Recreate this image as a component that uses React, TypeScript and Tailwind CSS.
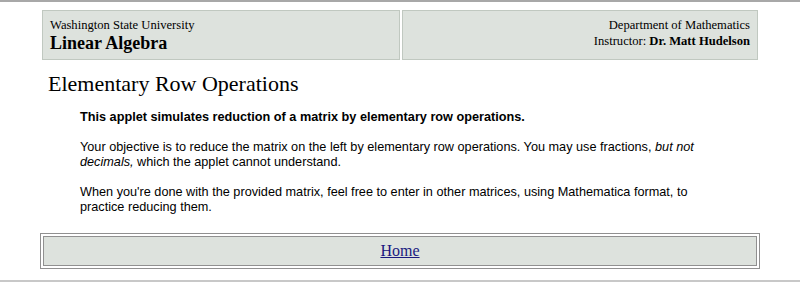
export default function App() {
  return (
    <div className="w-[800px] h-[286px] bg-white overflow-hidden font-['Liberation_Serif',serif] text-black">
      <div className="border-t-2 border-[#a8a8a8]" />

      <div className="mx-auto mt-[6px] flex w-[720px] gap-[2px] p-[2px]">
        <div className="h-[50px] w-[358px] border border-[#c0c8c0] bg-[#dde2dd] pl-[7px] pt-[6px]">
          <div className="text-[12.6px] leading-[16px]">Washington State University</div>
          <div className="text-[18px] font-bold leading-[21px]">Linear Algebra</div>
        </div>
        <div className="h-[50px] flex-1 border border-[#c0c8c0] bg-[#dde2dd] pr-[7px] pt-[6px] text-right text-[12.6px] leading-[16px]">
          <div>Department of Mathematics</div>
          <div>
            Instructor: <b>Dr. Matt Hudelson</b>
          </div>
        </div>
      </div>

      <h1 className="ml-[48px] mt-[9px] text-[22px] leading-[26px]">Elementary Row Operations</h1>

      <div className="ml-[80px] mt-[13px] w-[640px] font-['Liberation_Sans',Arial,sans-serif] text-[12.7px] leading-[15px]">
        <p className="font-bold">This applet simulates reduction of a matrix by elementary row operations.</p>
        <p className="mt-[15px]">
          Your objective is to reduce the matrix on the left by elementary row operations. You may use fractions,{" "}
          <i>but not decimals,</i> which the applet cannot understand.
        </p>
        <p className="mt-[15px]">
          When you're done with the provided matrix, feel free to enter in other matrices, using Mathematica format, to
          practice reducing them.
        </p>
      </div>

      <div className="mx-auto mt-[18px] w-[720px] border border-[#909090] p-[2px]">
        <div className="flex h-[30px] items-center justify-center border border-[#909090] bg-[#dde2dd]">
          <a href="#" className="text-[16px] text-[#1a1a80] underline">
            Home
          </a>
        </div>
      </div>

      <div className="mt-[11px] border-t-2 border-[#c8c8c8]" />
    </div>
  );
}
